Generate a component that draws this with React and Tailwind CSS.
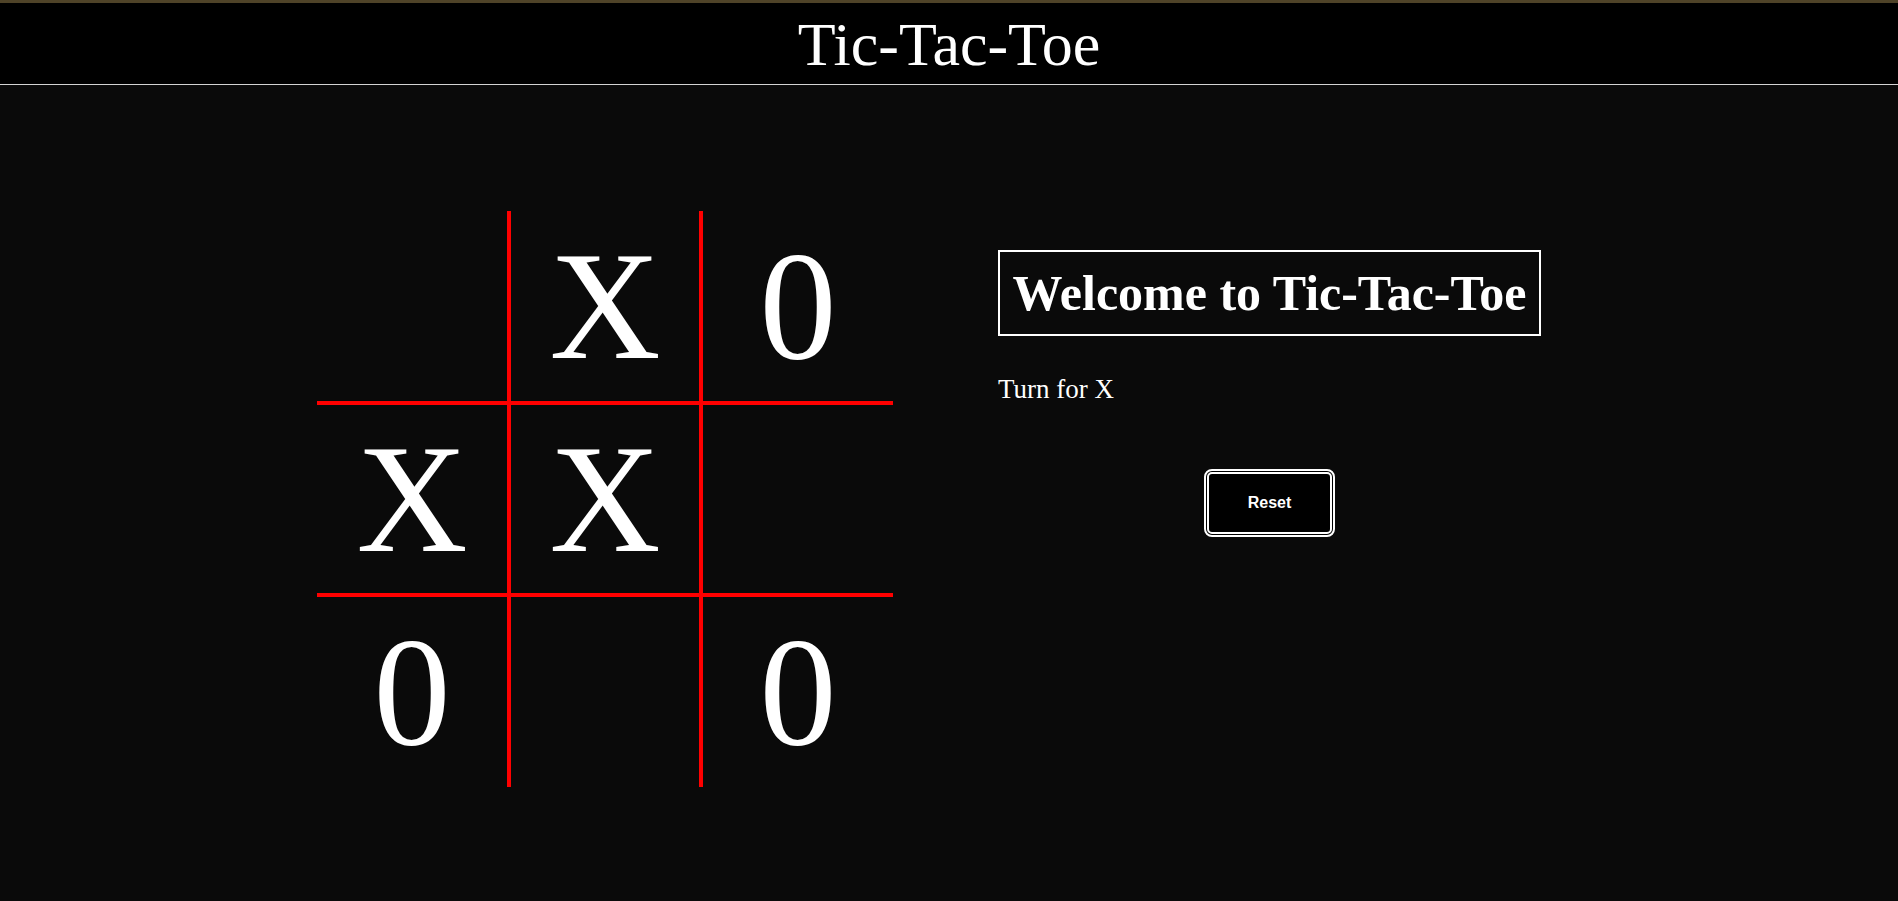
import { useState } from 'react';

const START = ['', 'X', '0', 'X', 'X', '', '0', '', '0'];

function cellBorders(i) {
  const r = Math.floor(i / 3);
  const c = i % 3;
  const cls = [];
  if (c < 2) cls.push('border-r-2');
  if (c > 0) cls.push('border-l-2');
  if (r < 2) cls.push('border-b-2');
  if (r > 0) cls.push('border-t-2');
  return cls.join(' ');
}

export default function App() {
  const [board, setBoard] = useState(START);
  const [turn, setTurn] = useState('X');

  const play = (i) => {
    if (board[i]) return;
    const next = [...board];
    next[i] = turn;
    setBoard(next);
    setTurn(turn === 'X' ? '0' : 'X');
  };

  const reset = () => {
    setBoard(Array(9).fill(''));
    setTurn('X');
  };

  return (
    <div className="min-h-screen bg-[#0a0a0a] text-white font-['Liberation_Serif','Times_New_Roman',serif]">
      <div className="h-[3px] bg-[#4f4328]" />
      <header className="h-[82px] bg-black border-b border-[#d4d4d4] flex items-center justify-center">
        <h1 className="text-[62px] leading-[68px] font-normal">Tic-Tac-Toe</h1>
      </header>

      <main className="flex items-start gap-[105px] pl-[317px] pt-[126px]">
        <div className="grid grid-cols-3 w-[576px]">
          {board.map((v, i) => (
            <div
              key={i}
              onClick={() => play(i)}
              className={`h-[192px] w-[192px] flex items-center justify-center text-[154px] leading-none border-[#ff0000] cursor-pointer select-none ${cellBorders(i)}`}
            >
              {v}
            </div>
          ))}
        </div>

        <div className="mt-[39px] flex flex-col w-[543px]">
          <h2 className="border-2 border-white py-[14px] text-center text-[50px] leading-[54px] font-bold whitespace-nowrap">
            Welcome to Tic-Tac-Toe
          </h2>
          <p className="mt-[38px] text-[27px] leading-[30px]">Turn for {turn}</p>
          <button
            onClick={reset}
            className="mt-[65px] self-center w-[131px] h-[68px] border-[5px] border-double border-white rounded-lg bg-black text-white font-bold text-[16px] font-['Liberation_Sans',Arial,sans-serif] cursor-pointer"
          >
            Reset
          </button>
        </div>
      </main>
    </div>
  );
}
